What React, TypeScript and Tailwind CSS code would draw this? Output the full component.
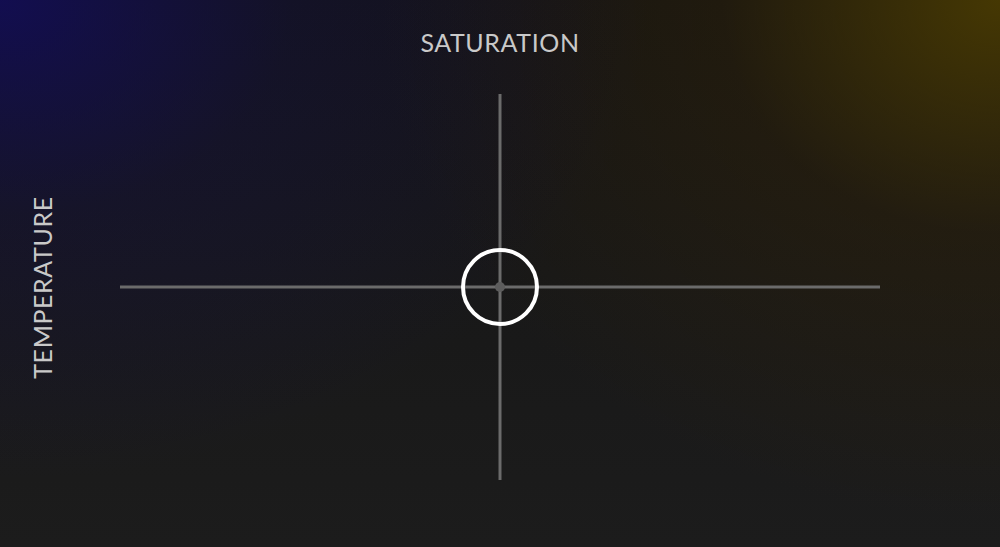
const AxisLabel = ({ text, vertical }: { text: string; vertical?: boolean }) => (
  <span
    className={`whitespace-nowrap font-['Lato',sans-serif] text-[25px] leading-none tracking-[0.6px] text-[#c9c9c9] ${
      vertical ? '-rotate-90' : ''
    }`}
  >
    {text}
  </span>
);

const Crosshair = () => (
  <svg width="760" height="386" viewBox="0 0 760 386" className="block">
    <line x1="0" y1="193" x2="760" y2="193" stroke="#6b6b6b" strokeWidth="3" />
    <line x1="380" y1="0" x2="380" y2="386" stroke="#6b6b6b" strokeWidth="3" />
    <circle cx="380" cy="193" r="5" fill="#5d5d5d" />
    <circle cx="380" cy="193" r="37" fill="none" stroke="#ffffff" strokeWidth="4" />
  </svg>
);

export default function App() {
  return (
    <div className="h-[547px] w-[1000px] overflow-hidden bg-[radial-gradient(ellipse_650px_480px_at_0%_0%,rgba(18,12,95,0.8),rgba(18,12,95,0.25)_45%,transparent),radial-gradient(ellipse_620px_520px_at_100%_0%,rgba(78,62,0,0.85),rgba(60,40,0,0.3)_45%,transparent),linear-gradient(180deg,#141414,#1c1c1c)]">
      <div className="grid h-full grid-cols-[120px_760px_120px] grid-rows-[94px_386px_67px]">
        <div className="col-span-3 flex justify-center pt-[30px]">
          <AxisLabel text="SATURATION" />
        </div>
        <div className="flex items-center justify-start pl-[31px]">
          <div className="flex w-[23px] items-center justify-center">
            <AxisLabel text="TEMPERATURE" vertical />
          </div>
        </div>
        <div>
          <Crosshair />
        </div>
        <div />
      </div>
    </div>
  );
}
